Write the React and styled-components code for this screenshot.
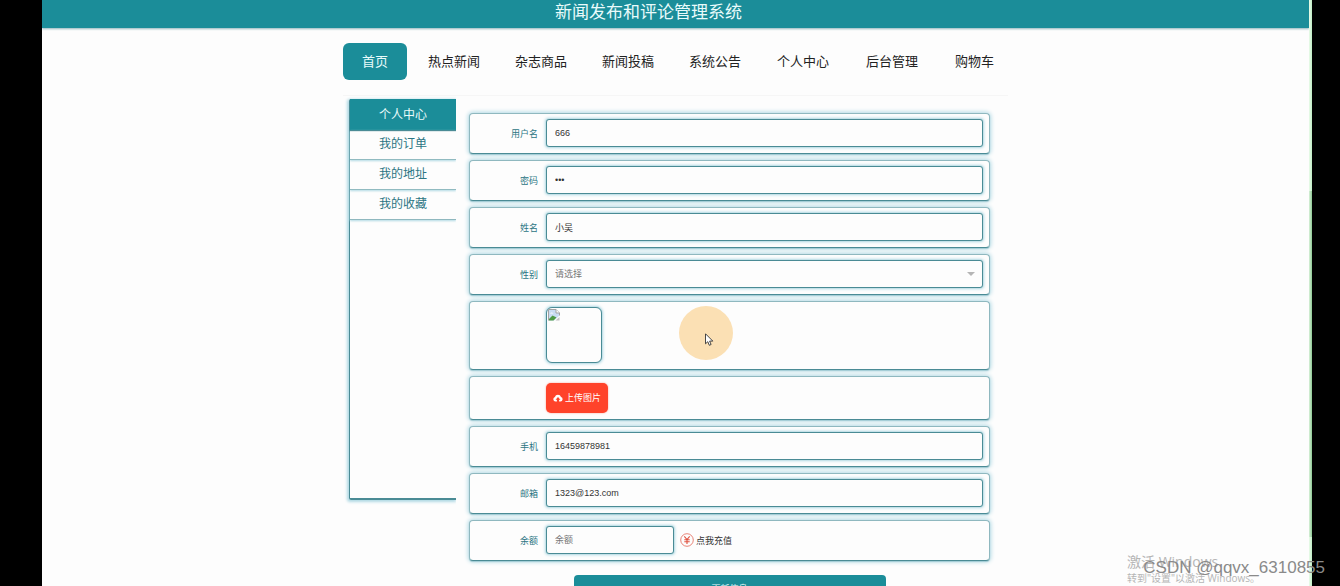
import React from "react";
import styled, { createGlobalStyle, css } from "styled-components";

const TEAL = "#1b8d99";
const LINE = "#4a8b95";
const SOFT_LINE = "#8fb8bf";
const GLOW = "#b0d9e4";

const GlobalStyle = createGlobalStyle`
  *, *::before, *::after { box-sizing: border-box; }
  body {
    margin: 0;
    background: #000;
    font-family: "Liberation Sans", "Noto Sans CJK SC", sans-serif;
    font-size: 9px;
    color: #333;
  }
  a { color: inherit; text-decoration: none; }
  button, input, select { font: inherit; color: inherit; margin: 0; }
  ul { list-style: none; margin: 0; padding: 0; }
`;

const Shell = styled.div`
  position: relative;
  display: grid;
  grid-template-columns: minmax(0, 1fr) 3px;
  height: 100vh;
  overflow: hidden;
  padding: 0 28px 0 42px;
`;

const Page = styled.div`
  background: #fdfdfd;
  overflow: hidden;
`;

const ScrollRail = styled.div`
  display: flex;
  flex-direction: column;
  background: linear-gradient(90deg, #eafbea, #bfeec4);
`;

const RailSpace = styled.div`
  flex: ${(p) => p.$share};
`;

const ScrollThumb = styled.div`
  flex: 346;
  background: linear-gradient(90deg, #d9f2da, #8cc892);
`;

const Banner = styled.header`
  background: ${TEAL};
  height: 28px;
  padding-right: 54px;
  text-align: center;
  box-shadow: 0 1px 2px #8fb3bb;
`;

const Title = styled.h1`
  margin: 0;
  color: #e9fbfb;
  font-size: 17px;
  line-height: 26px;
  font-weight: 400;
`;

const Container = styled.div`
  width: 665px;
  max-width: 100%;
  margin: 0 auto;
`;

const Nav = styled.nav`
  display: flex;
  align-items: center;
  gap: 1px;
  padding: 15px 0;
  border-bottom: 1px solid #f6f6f6;
`;

const NavLink = styled.a`
  padding: 0 ${(p) => (p.$wide ? 18 : 17)}px;
  font-size: 13px;
  line-height: 37px;
  color: #222;
  white-space: nowrap;
  ${(p) =>
    p.$active &&
    css`
      padding: 0 19px;
      margin-right: 3px;
      border-radius: 6px;
      background: ${TEAL};
      color: #e9fbfb;
    `}
`;

const Columns = styled.div`
  display: flex;
  align-items: flex-start;
  gap: 13px;
  padding: 3px 18px 0 6px;
`;

const Sidebar = styled.aside`
  flex: 0 0 107px;
  min-height: 401px;
  border-left: 1px solid ${LINE};
  border-bottom: 2px solid ${LINE};
  border-radius: 2px 0 0 2px;
  box-shadow: -1px 1px 3px 1px ${GLOW};
  clip-path: inset(-5px 0 -6px -6px);
`;

const SideTitle = styled.h2`
  margin: 0;
  padding-top: 2px;
  background: ${TEAL};
  color: #e9fbfb;
  font-size: 12px;
  font-weight: 400;
  line-height: 29px;
  text-align: center;
  box-shadow: 0 1px 1px ${LINE};
`;

const SideLink = styled.a`
  display: block;
  color: #2b7583;
  font-size: 12px;
  line-height: 28px;
  text-align: center;
  border-bottom: 1px solid ${SOFT_LINE};
  box-shadow: 0 1px 2px ${GLOW};
  padding-bottom: 1px;
`;

const Form = styled.form`
  flex: 1;
  min-width: 0;
  display: flex;
  flex-direction: column;
  gap: 6px;
  padding-top: 14px;
`;

const Row = styled.div`
  position: relative;
  display: grid;
  grid-template-columns: 62px minmax(0, 1fr);
  column-gap: 8px;
  align-items: center;
  min-height: ${(p) => (p.$tall ? 44 : 41)}px;
  padding: 5px 6px 6px;
  background: #fdfdfd;
  border: 1px solid ${SOFT_LINE};
  border-bottom-color: ${LINE};
  border-radius: 4px;
  box-shadow: 0 0 4px 1px ${GLOW}, 0 1px 1px ${SOFT_LINE};
`;

const Label = styled.label`
  color: #2b7583;
  text-align: right;
`;

const Field = styled.div`
  display: flex;
  align-items: center;
  gap: 6px;
  grid-column: 2;
`;

const control = css`
  width: ${(p) => (p.$short ? "128px" : "100%")};
  height: 28px;
  padding: 0 8px;
  background: #fdfdfd;
  border: 1px solid ${LINE};
  border-radius: 3px;
  box-shadow: 0 0 3px 1px ${GLOW}, 0 0 1px ${LINE};
  outline: none;
`;

const Input = styled.input`
  ${control}
  &::placeholder { color: #777; opacity: 1; }
`;

const SelectWrap = styled.div`
  position: relative;
  width: 100%;
  display: flex;
`;

const Select = styled.select`
  ${control}
  appearance: none;
  color: #777;
`;

const Caret = styled.span`
  position: absolute;
  right: 8px;
  top: 12px;
  border: 4px solid transparent;
  border-top-color: #b5b5b5;
  pointer-events: none;
`;

const Avatar = styled.div`
  width: 56px;
  height: 56px;
  padding: 1px;
  border: 1px solid ${LINE};
  border-radius: 6px;
  background: #fdfdfd;
  box-shadow: 0 0 3px 1px ${GLOW}, 0 0 1px ${LINE};
`;

const UploadButton = styled.button`
  display: flex;
  align-items: center;
  justify-content: center;
  gap: 2px;
  width: 62px;
  height: 30px;
  padding: 0;
  border: 0;
  border-radius: 5px;
  background: #ff432a;
  color: #fff;
  white-space: nowrap;
  box-shadow: 0 0 2px #ff9c8c;
`;

const Recharge = styled.a`
  display: flex;
  align-items: center;
  gap: 2px;
  color: #333;
`;

const Submit = styled.button`
  align-self: center;
  width: 312px;
  height: 27px;
  margin-top: 8px;
  padding: 0;
  border: 0;
  border-radius: 4px;
  background: ${TEAL};
  color: #e9fbfb;
`;

const Pointer = styled.div`
  position: absolute;
  left: 209px;
  top: 4px;
  width: 54px;
  height: 54px;
  border-radius: 50%;
  background: #fbe0b4;
  display: flex;
  padding: 27px 0 0 26px;
`;

const Activation = styled.div`
  position: absolute;
  left: calc(100% - 213px);
  bottom: 0;
  color: #b5b5b5;
  font-family: "Open Sans", "Noto Sans CJK SC", sans-serif;
  white-space: nowrap;
`;

const ActivationTitle = styled.div`
  font-size: 14px;
  line-height: 16px;
`;

const ActivationHint = styled.div`
  font-size: 10px;
  line-height: 16px;
`;

const Credit = styled.div`
  position: absolute;
  right: 15px;
  bottom: 7px;
  color: #8a8a8a;
  font-size: 17px;
  line-height: 22px;
`;

const NAV = [
  { text: "首页", active: true },
  { text: "热点新闻" },
  { text: "杂志商品" },
  { text: "新闻投稿" },
  { text: "系统公告" },
  { text: "个人中心", wide: true },
  { text: "后台管理", wide: true },
  { text: "购物车", wide: true },
];

const SIDE = ["我的订单", "我的地址", "我的收藏"];

function TextRow({ id, label, ...rest }) {
  return (
    <Row>
      <Label htmlFor={id}>{label}</Label>
      <Field>
        <Input id={id} {...rest} />
      </Field>
    </Row>
  );
}

function BrokenImageIcon() {
  return (
    <svg width="12" height="12" viewBox="0 0 12 12" role="img" aria-label="头像">
      <path d="M.5 11.500V.5h7.500l3.500 3.500v2.500L6 11.500z" fill="#c9dcf3" />
      <path d="M.5 11.500V.5h7.500l3.500 3.500v2.500" fill="none" stroke="#a3a3a3" />
      <path d="M8 .5v3.500h3.500" fill="#fff" stroke="#a3a3a3" />
      <path d="M1 11.500V10l3.500-3.500 4 2L5.500 11.500z" fill="#4f9b45" />
      <path d="M2 4.500q1.500-2 3.500 0z" fill="#fff" />
      <path d="M7.500 11.500l4-3.500v3.500z" fill="#c4c4c4" />
    </svg>
  );
}

function CloudIcon() {
  return (
    <svg width="10" height="8" viewBox="0 0 20 16" aria-hidden="true">
      <path
        d="M5 15a4.500 4.500 0 0 1-1.200-8.800A6.300 6.300 0 0 1 16 6.200 4.500 4.500 0 0 1 15 15h-2.800v-3.500h2.600L10 6l-4.800 5.500h2.600V15z"
        fill="#fff"
      />
    </svg>
  );
}

function YuanIcon() {
  return (
    <svg width="14" height="14" viewBox="0 0 14 14" aria-hidden="true" fill="none" stroke="#e0503f">
      <circle cx="7" cy="7" r="6.300" strokeWidth=".7" />
      <path d="M4.300 3.300L7 6.500l2.700-3.200M7 6.500v4.500M4.300 6.800h5.400M4.300 8.700h5.400" strokeWidth="1.100" />
    </svg>
  );
}

function ArrowCursor() {
  return (
    <svg width="9" height="13" viewBox="0 0 9 13" aria-hidden="true">
      <path d="M.5 .8v10l2.300-2.100 1.500 3.600 1.800-.8-1.500-3.400h3.200z" fill="#fff" stroke="#333" strokeWidth=".9" />
    </svg>
  );
}

export default function App() {
  return (
    <>
      <GlobalStyle />
      <Shell>
        <Page>
          <Banner>
            <Title>新闻发布和评论管理系统</Title>
          </Banner>
          <Container>
            <Nav>
              {NAV.map((n) => (
                <NavLink key={n.text} href="#" $active={n.active} $wide={n.wide}>
                  {n.text}
                </NavLink>
              ))}
            </Nav>
            <Columns>
              <Sidebar>
                <SideTitle>个人中心</SideTitle>
                <ul>
                  {SIDE.map((s) => (
                    <li key={s}>
                      <SideLink href="#">{s}</SideLink>
                    </li>
                  ))}
                </ul>
              </Sidebar>
              <Form onSubmit={(e) => e.preventDefault()}>
                <TextRow id="username" label="用户名" defaultValue="666" />
                <TextRow id="password" label="密码" type="password" defaultValue="666" />
                <TextRow id="realname" label="姓名" defaultValue="小吴" />
                <Row>
                  <Label htmlFor="gender">性别</Label>
                  <Field>
                    <SelectWrap>
                      <Select id="gender" defaultValue="">
                        <option value="">请选择</option>
                      </Select>
                      <Caret />
                    </SelectWrap>
                  </Field>
                </Row>
                <Row>
                  <Field>
                    <Avatar>
                      <BrokenImageIcon />
                    </Avatar>
                  </Field>
                  <Pointer>
                    <ArrowCursor />
                  </Pointer>
                </Row>
                <Row $tall>
                  <Field>
                    <UploadButton type="button">
                      <CloudIcon />
                      上传图片
                    </UploadButton>
                  </Field>
                </Row>
                <TextRow id="phone" label="手机" defaultValue="16459878981" />
                <TextRow id="email" label="邮箱" defaultValue="1323@123.com" />
                <Row>
                  <Label htmlFor="balance">余额</Label>
                  <Field>
                    <Input id="balance" placeholder="余额" $short />
                    <Recharge href="#">
                      <YuanIcon />
                      点我充值
                    </Recharge>
                  </Field>
                </Row>
                <Submit type="submit">更新信息</Submit>
              </Form>
            </Columns>
          </Container>
        </Page>
        <ScrollRail>
          <RailSpace $share={191} />
          <ScrollThumb />
          <RailSpace $share={49} />
        </ScrollRail>
        <Activation>
          <ActivationTitle>激活 Windows</ActivationTitle>
          <ActivationHint>转到"设置"以激活 Windows。</ActivationHint>
        </Activation>
        <Credit>CSDN @qqvx_6310855</Credit>
      </Shell>
    </>
  );
}
